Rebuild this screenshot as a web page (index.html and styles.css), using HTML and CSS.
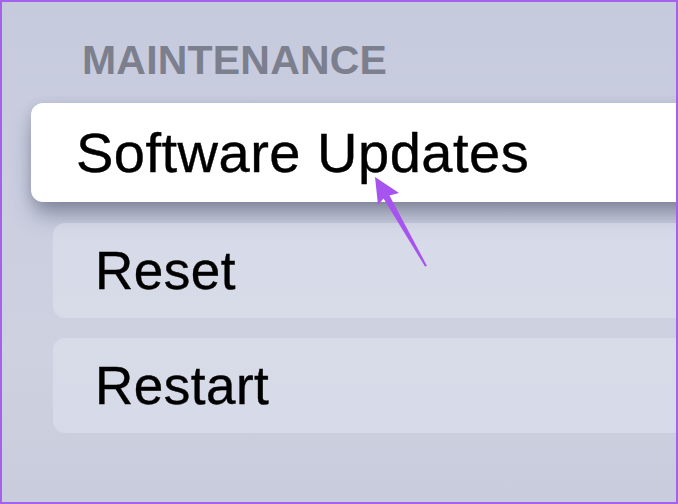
FILE: index.html
```html
<!DOCTYPE html>
<html lang="en">
<head>
  <meta charset="UTF-8">
  <title>Maintenance</title>
  <link rel="stylesheet" href="styles.css">
</head>
<body>
  <div class="screen">
    <div class="panel">
      <h2 class="section-title">MAINTENANCE</h2>
      <div class="menu">
        <div class="menu-item focused">Software Updates</div>
        <div class="menu-item">Reset</div>
        <div class="menu-item">Restart</div>
      </div>
    </div>
    <svg class="pointer" viewBox="0 0 678 504" width="678" height="504">
      <polygon points="375,177 399,193 389.5,195.5 427,266 425,266.5 383.5,198.5 378,205" fill="#a653f0"/>
    </svg>
  </div>
</body>
</html>
```

FILE: styles.css
```css
html, body { margin: 0; padding: 0; background: #fff; font-family: "Liberation Sans", Arial, sans-serif; }
.screen { position: relative; width: 678px; height: 504px; overflow: hidden; }
.panel { box-sizing: border-box; width: 678px; height: 504px; border: 2px solid #a462ea; overflow: hidden; padding-top: 38px; background: linear-gradient(180deg, #c6cadd 0%, #cbcfe0 45%, #cdd1e0 70%, #c8ccdc 100%); }
.section-title { margin: 0 0 22px 80px; font-size: 41px; line-height: 41px; font-weight: bold; letter-spacing: 0.2px; color: #7c7f8d; }
.menu { display: flex; flex-direction: column; gap: 20px; }
.menu-item { display: flex; align-items: center; height: 95px; margin-left: 51px; margin-right: -40px; padding-left: 42px; border-radius: 12px; background: rgba(232, 235, 245, 0.4); font-size: 53px; letter-spacing: 0.5px; color: #000; -webkit-text-stroke: 0.4px #000; }
.menu-item.focused { height: 99px; margin-left: 29px; margin-bottom: 1px; padding-left: 45px; background: #fff; font-size: 56px; box-shadow: 0 16px 22px -4px rgba(70, 76, 102, 0.5), 0 3px 12px rgba(70, 76, 102, 0.2); }
.pointer { position: absolute; left: 0; top: 0; pointer-events: none; }
```
